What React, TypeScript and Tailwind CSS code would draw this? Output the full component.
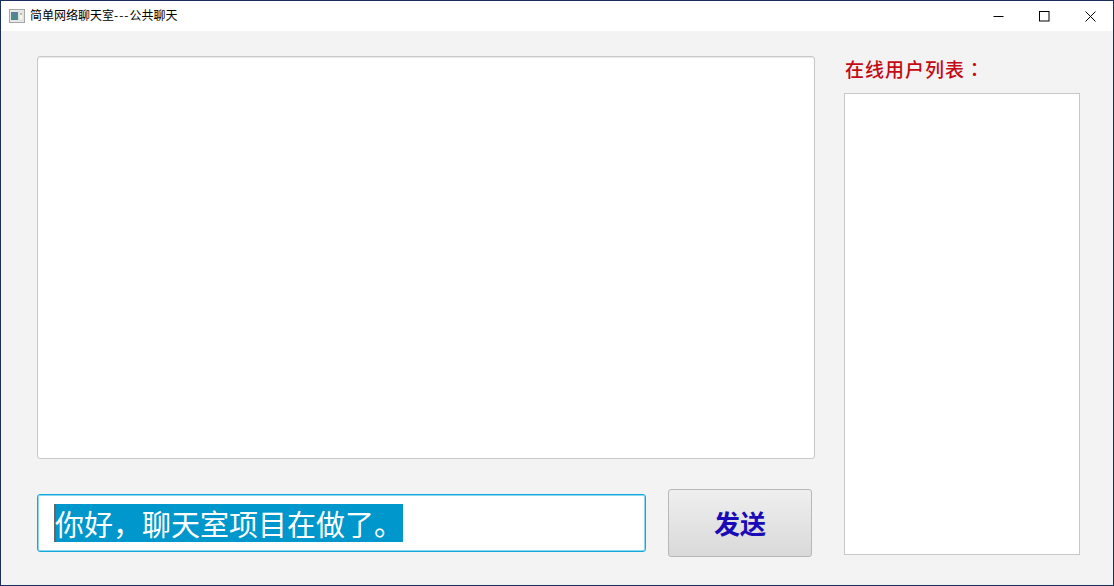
const cjk = "font-['Noto_Sans_CJK_SC','Liberation_Sans',sans-serif]";

function AppIcon() {
  return (
    <svg width="16" height="14" viewBox="0 0 16 14" className="shrink-0">
      <rect x="0.5" y="0.5" width="15" height="13" fill="#e8e8e8" stroke="#a8a8a8" />
      <rect x="2" y="3" width="7" height="8" fill="#4d8a8a" />
      <rect x="2" y="3" width="7" height="3" fill="#5c7f9c" />
      <rect x="10" y="3" width="4" height="8" fill="#f4f4f4" stroke="#c9c9c9" strokeWidth="0.5" />
      <rect x="11" y="4" width="2" height="2" fill="#a9c7a0" />
    </svg>
  );
}

function TitleBar() {
  return (
    <div className="flex h-[30px] shrink-0 items-center bg-white">
      <div className="flex flex-1 items-center gap-[5px] pl-2 text-[12px] leading-none text-black">
        <AppIcon />
        <span className="relative top-[-1px]">
          简单网络聊天室<span className="tracking-[1px]">---</span>公共聊天
        </span>
      </div>
      <div className="flex h-full items-center">
        <button className="flex h-full w-[46px] items-center justify-center">
          <svg width="11" height="11" viewBox="0 0 11 11">
            <path d="M0.5 5.5H10.5" stroke="#000" strokeWidth="1" />
          </svg>
        </button>
        <button className="flex h-full w-[46px] items-center justify-center">
          <svg width="11" height="11" viewBox="0 0 11 11">
            <rect x="0.5" y="0.5" width="9.5" height="9.5" fill="none" stroke="#000" strokeWidth="1" />
          </svg>
        </button>
        <button className="flex h-full w-[46px] items-center justify-center">
          <svg width="11" height="11" viewBox="0 0 11 11">
            <path d="M0.5 0.5L10.5 10.5M10.5 0.5L0.5 10.5" stroke="#000" strokeWidth="1" />
          </svg>
        </button>
      </div>
    </div>
  );
}

export default function App() {
  return (
    <div className={`${cjk} flex h-[586px] w-[1114px] flex-col overflow-hidden border border-[#1b2f5e] bg-[#f3f3f3]`}>
      <TitleBar />
      <div className="flex flex-1">
        <div className="ml-[36px] flex w-[778px] flex-col pt-[25px]">
          <div className="h-[403px] rounded-[3px] border border-[#c8c8c8] bg-white shadow-[inset_0_1px_1px_#e8e8e8]" />
          <div className="mt-[30px] flex items-center">
            <div className="flex h-[58px] w-[609px] items-center rounded-[3px] border border-[#12a8dc] bg-white pl-4 shadow-[inset_0_0_0_1px_#8fd6ef]">
              <span className="flex h-[38px] w-[349px] items-center whitespace-nowrap bg-[#0097cc] pl-px text-[29px] leading-none text-white shadow-[inset_2px_0_0_#666]">
                你好，聊天室项目在做了。
              </span>
            </div>
            <button className="ml-[22px] flex h-[68px] w-[144px] items-center justify-center rounded-[3px] border border-[#b8b8b8] bg-gradient-to-b from-[#efefef] to-[#d9d9d9] text-[26px] font-bold leading-none text-[#1a0ab8]">
              发送
            </button>
          </div>
        </div>
        <div className="ml-[29px] flex w-[236px] flex-col">
          <div className="flex h-[62px] items-end pb-[15px] pl-px text-[19px] font-medium leading-none tracking-[1px] text-[#c40a14]">
            在线用户列表<span className="font-['Noto_Sans_CJK_TC',sans-serif]">：</span>
          </div>
          <div className="h-[462px] border border-[#c8c8c8] bg-white" />
        </div>
      </div>
    </div>
  );
}
